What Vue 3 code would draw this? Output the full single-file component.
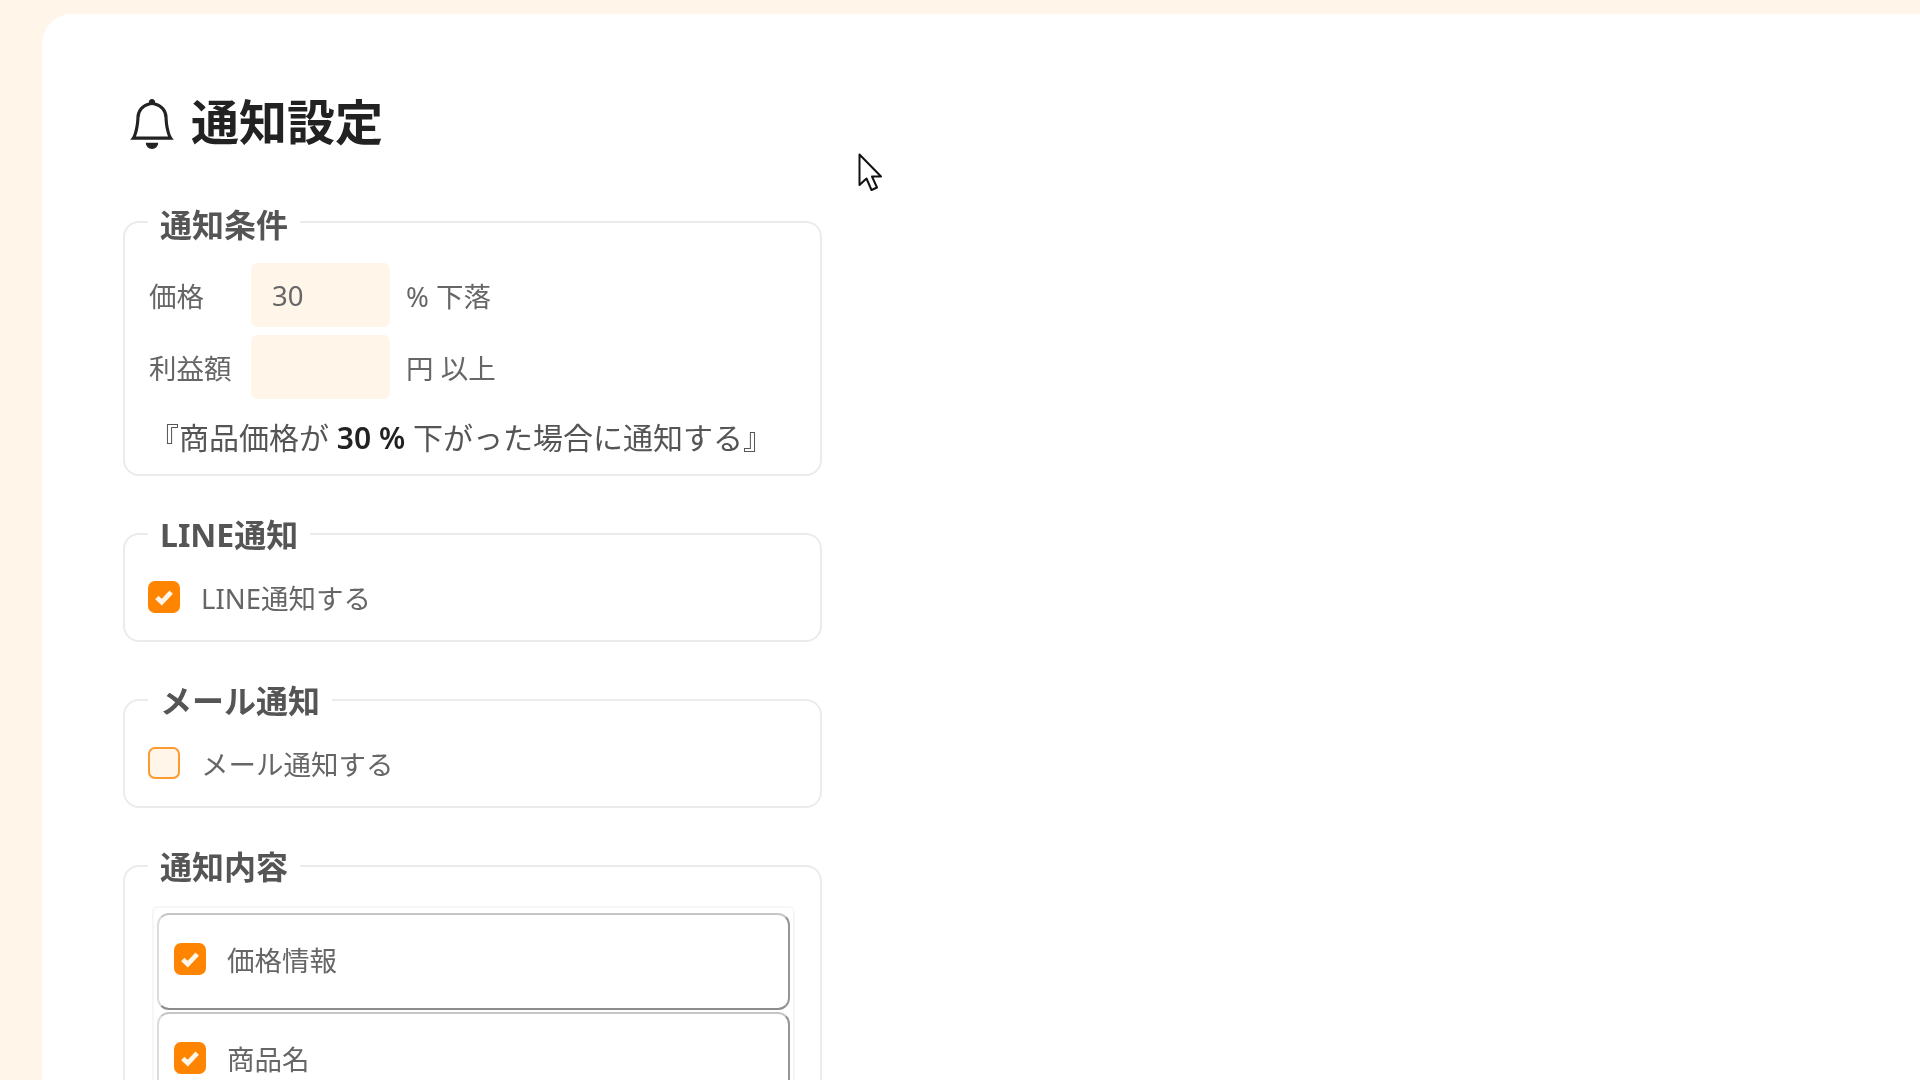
<script setup>
const contentItems = [
  { label: '価格情報', checked: true },
  { label: '商品名', checked: true }
]
</script>

<template>
  <div class="page">
    <main class="panel">
      <h1 class="title">
        <svg class="bell" viewBox="0 0 16 16" fill="currentColor">
          <path d="M8 16a2 2 0 0 0 2-2H6a2 2 0 0 0 2 2zM8 1.918l-.797.161A4.002 4.002 0 0 0 4 6c0 .628-.134 2.197-.459 3.742-.16.767-.376 1.566-.663 2.258h10.244c-.287-.692-.502-1.49-.663-2.258C12.134 8.197 12 6.628 12 6a4.002 4.002 0 0 0-3.203-3.92L8 1.917zM14.22 12c.223.447.481.801.78 1H1c.299-.199.557-.553.78-1C2.68 10.2 3 6.88 3 6c0-2.42 1.72-4.44 4.005-4.901a1 1 0 1 1 1.99 0A5.002 5.002 0 0 1 13 6c0 .88.32 4.2 1.22 6z" />
        </svg>
        <span>通知設定</span>
      </h1>

      <fieldset class="group">
        <legend>通知条件</legend>
        <div class="row">
          <span class="row-label">価格</span>
          <input class="num" type="text" value="30" />
          <span class="unit">% 下落</span>
        </div>
        <div class="row">
          <span class="row-label">利益額</span>
          <input class="num" type="text" value="" />
          <span class="unit">円 以上</span>
        </div>
        <p class="summary">『商品価格が <b>30 %</b> 下がった場合に通知する』</p>
      </fieldset>

      <fieldset class="group">
        <legend>LINE通知</legend>
        <label class="check">
          <span class="box on">
            <svg viewBox="0 0 16 16"><path d="M4.400 8.200l2.500 2.400 4.700-5" /></svg>
          </span>
          <span>LINE通知する</span>
        </label>
      </fieldset>

      <fieldset class="group">
        <legend>メール通知</legend>
        <label class="check">
          <span class="box"></span>
          <span>メール通知する</span>
        </label>
      </fieldset>

      <fieldset class="group last">
        <legend>通知内容</legend>
        <div class="sortable">
          <div v-for="item in contentItems" :key="item.label" class="item">
            <label class="check">
              <span class="box on">
                <svg viewBox="0 0 16 16"><path d="M4.400 8.200l2.500 2.400 4.700-5" /></svg>
              </span>
              <span>{{ item.label }}</span>
            </label>
          </div>
        </div>
      </fieldset>
    </main>

    <!-- mouse pointer in the capture -->
    <svg class="cursor" viewBox="0 0 24 39">
      <path d="M1.500 1.500V32l7-6.500 5 11.500 5.500-2.500-5-11h9z" />
    </svg>
  </div>
</template>

<style>
html,
body {
  margin: 0;
  background: #fff5e9;
  overflow: hidden;
}
</style>

<style scoped>
.page {
  position: relative;
  width: 1920px;
  height: 1080px;
  overflow: hidden;
  background: #fff5e9;
  font-family: 'Noto Sans', 'Noto Sans CJK JP', sans-serif;
  color: #666;
  /* the reference is a soft video frame */
  filter: blur(0.4px);
}

.panel {
  margin: 14px 0 0 42px;
  height: 1200px;
  box-sizing: border-box;
  padding: 78px 0 0 81px;
  background: #fff;
  border-radius: 30px 0 0 0;
}

.title {
  display: flex;
  align-items: center;
  gap: 14px;
  margin: 0 0 47px;
  height: 60px;
  font-size: 48px;
  font-weight: 700;
  line-height: 60px;
  color: #222;
}

.bell {
  width: 50px;
  height: 50px;
  margin: 4px 0 0 4px;
}

.group {
  width: 699px;
  box-sizing: border-box;
  margin: 0 0 37px;
  padding: 18px 24px 16px;
  border: 2px solid #ebebeb;
  border-radius: 16px;
}

.group + .group {
  padding-top: 20px;
}

/* extra top padding drops the text a little below the border line */
.group legend {
  margin-left: -1px;
  padding: 6px 12px 0;
  font-size: 32px;
  font-weight: 700;
  line-height: 40px;
  color: #555;
}

.group + .group legend {
  padding-top: 2px;
}

.row {
  display: flex;
  align-items: center;
  margin-bottom: 8px;
  font-size: 27.500px;
}

.row-label {
  width: 102px;
}

.num {
  width: 139px;
  height: 64px;
  box-sizing: border-box;
  padding: 0 21px;
  border: 0;
  border-radius: 6px;
  background: #fff5e9;
  font: inherit;
  color: #666;
}

.unit {
  margin-left: 16px;
}

.summary {
  margin: 19px 0 0;
  font-size: 30px;
  line-height: 40px;
  white-space: nowrap;
  color: #555;
}

.summary b {
  font-weight: 600;
  color: #222;
}

.check {
  display: flex;
  align-items: center;
  gap: 21px;
  height: 40px;
  margin: 2px 0 7px;
  font-size: 27.500px;
}

.box {
  width: 32px;
  height: 32px;
  margin-left: -1px;
  box-sizing: border-box;
  border: 2px solid #ff9a2e;
  border-radius: 7px;
  background: #fff5e9;
}

.box.on {
  border: 0;
  background: #ff8400;
}

.box svg {
  display: block;
  width: 32px;
  height: 32px;
  fill: none;
  stroke: #fff6e8;
  stroke-width: 2.400;
}

.sortable {
  width: 643px;
  margin: -1px 0 0 3px;
  box-sizing: border-box;
  padding: 5px 3px;
  border: 2px solid #f6f6f6;
  border-radius: 6px;
}

.item {
  height: 97px;
  box-sizing: border-box;
  margin-bottom: 2px;
  padding: 24px 16px 0;
  border: 2px solid #c6c6c6;
  border-right-color: #969696;
  border-bottom-color: #8c8c8c;
  border-left-color: #dcdcdc;
  border-radius: 12px;
  background: #fff;
}

.item .check {
  margin: 0;
}

.cursor {
  position: absolute;
  left: 858px;
  top: 153px;
  width: 24px;
  height: 39px;
}

.cursor path {
  fill: #fff;
  stroke: #111;
  stroke-width: 2;
  stroke-linejoin: round;
}
</style>
